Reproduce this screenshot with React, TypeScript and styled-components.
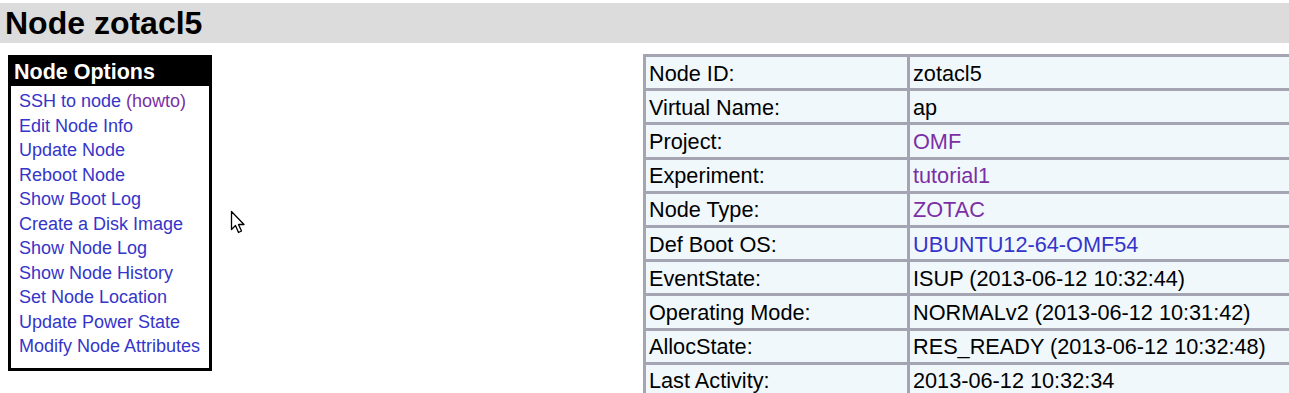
import React from 'react';
import styled, { createGlobalStyle } from 'styled-components';

const GlobalStyle = createGlobalStyle`
  html, body {
    margin: 0;
    padding: 0;
    background: #ffffff;
    overflow: hidden;
  }
  body {
    font-family: "Liberation Sans", Arial, sans-serif;
    color: #000;
  }
`;

const Page = styled.div`
  position: relative;
  width: 1289px;
  height: 393px;
  padding-top: 3px;
  box-sizing: border-box;
  overflow: hidden;
`;

const TitleBar = styled.h1`
  margin: 0;
  height: 40px;
  line-height: 40px;
  background: #dcdcdc;
  padding-left: 5px;
  font-size: 32px;
  font-weight: bold;
`;

const Body = styled.div`
  display: flex;
  align-items: flex-start;
  padding-left: 8px;
  margin-top: 11px;
`;

const OptionsBox = styled.div`
  width: 204px;
  flex-shrink: 0;
  box-sizing: border-box;
  border: 3px solid #000;
  margin-top: 1px;
  padding-bottom: 9px;
`;

const OptionsHeader = styled.div`
  background: #000;
  color: #fff;
  font-weight: bold;
  font-size: 21.5px;
  height: 28px;
  line-height: 28px;
  padding-left: 3px;
`;

const OptionsList = styled.ul`
  list-style: none;
  margin: 0;
  padding: 3px 0 0 8px;
`;

const OptionItem = styled.li`
  font-size: 18px;
  line-height: 24.5px;
  white-space: nowrap;
`;

const Link = styled.a<{ $visited?: boolean }>`
  color: ${({ $visited }) => ($visited ? '#7b2fa5' : '#3535c9')};
  text-decoration: none;
`;

const InfoTable = styled.table`
  margin-left: 431px;
  width: 720px;
  flex-shrink: 0;
  border-collapse: collapse;
  border-top: 2px solid #a6a6b4;
  border-left: 3px solid #a6a6b4;
`;

const Row = styled.tr`
  height: 34.2px;
`;

const Cell = styled.td<{ $label?: boolean }>`
  background: #f0f8fb;
  border: 3px solid #a4a4b2;
  font-size: 21.7px;
  line-height: 26px;
  padding: 2px 2px 0 3px;
  width: ${({ $label }) => ($label ? '256px' : 'auto')};
  white-space: nowrap;
  vertical-align: middle;
`;

const Cursor = styled.svg`
  position: absolute;
  left: 230px;
  top: 210px;
`;

const options: { text: string; extra?: string }[] = [
  { text: 'SSH to node', extra: '(howto)' },
  { text: 'Edit Node Info' },
  { text: 'Update Node' },
  { text: 'Reboot Node' },
  { text: 'Show Boot Log' },
  { text: 'Create a Disk Image' },
  { text: 'Show Node Log' },
  { text: 'Show Node History' },
  { text: 'Set Node Location' },
  { text: 'Update Power State' },
  { text: 'Modify Node Attributes' },
];

type Value = { text: string; link?: 'visited' | 'link' };

const rows: [string, Value][] = [
  ['Node ID:', { text: 'zotacl5' }],
  ['Virtual Name:', { text: 'ap' }],
  ['Project:', { text: 'OMF', link: 'visited' }],
  ['Experiment:', { text: 'tutorial1', link: 'visited' }],
  ['Node Type:', { text: 'ZOTAC', link: 'visited' }],
  ['Def Boot OS:', { text: 'UBUNTU12-64-OMF54', link: 'link' }],
  ['EventState:', { text: 'ISUP (2013-06-12 10:32:44)' }],
  ['Operating Mode:', { text: 'NORMALv2 (2013-06-12 10:31:42)' }],
  ['AllocState:', { text: 'RES_READY (2013-06-12 10:32:48)' }],
  ['Last Activity:', { text: '2013-06-12 10:32:34' }],
];

export default function App() {
  return (
    <Page>
      <GlobalStyle />
      <TitleBar>Node zotacl5</TitleBar>
      <Body>
        <OptionsBox>
          <OptionsHeader>Node Options</OptionsHeader>
          <OptionsList>
            {options.map((o) => (
              <OptionItem key={o.text}>
                <Link href="#">{o.text}</Link>
                {o.extra && (
                  <>
                    {' '}
                    <Link href="#" $visited>
                      {o.extra}
                    </Link>
                  </>
                )}
              </OptionItem>
            ))}
          </OptionsList>
        </OptionsBox>
        <InfoTable>
          <tbody>
            {rows.map(([label, value]) => (
              <Row key={label}>
                <Cell $label>{label}</Cell>
                <Cell>
                  {value.link ? (
                    <Link href="#" $visited={value.link === 'visited'}>
                      {value.text}
                    </Link>
                  ) : (
                    value.text
                  )}
                </Cell>
              </Row>
            ))}
          </tbody>
        </InfoTable>
      </Body>
      <Cursor width="16" height="26" viewBox="0 0 16 26">
        <path
          d="M1.5 1.5 L1.5 19.5 L5.5 15.5 L8.5 22.5 L11.5 21 L8.5 14.5 L14 14.5 Z"
          fill="#fff"
          stroke="#000"
          strokeWidth="1.3"
          strokeLinejoin="round"
        />
      </Cursor>
    </Page>
  );
}
